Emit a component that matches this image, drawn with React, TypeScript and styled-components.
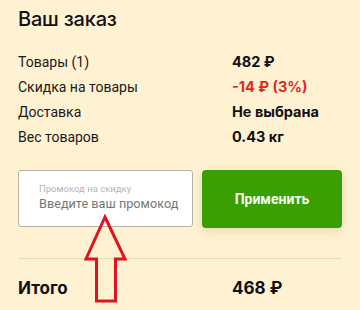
import styled, { createGlobalStyle } from "styled-components";

const Global = createGlobalStyle`
  html, body {
    margin: 0;
    padding: 0;
    background: #fef2d3;
  }
  body {
    font-family: Inter, "Noto Sans", "Liberation Sans", sans-serif;
    color: #111;
  }
`;

const Panel = styled.section`
  position: relative;
  width: 360px;
  height: 310px;
  box-sizing: border-box;
  padding: 6px 18px 0;
  overflow: hidden;
`;

const Title = styled.h2`
  margin: 0;
  font-size: 20px;
  line-height: 26px;
  font-weight: 500;
  letter-spacing: -0.2px;
`;

const Summary = styled.dl`
  margin: 17px 0 0;
  display: grid;
  grid-template-columns: 214px 1fr;
  grid-auto-rows: 25px;
  align-items: center;
`;

const Label = styled.dt`
  font-family: Roboto, "Liberation Sans", sans-serif;
  font-size: 14px;
  color: #1a1a1a;
`;

const Value = styled.dd<{ $accent?: boolean }>`
  margin: 0;
  font-size: 14.5px;
  font-weight: 700;
  color: ${({ $accent }) => ($accent ? "#e22a1e" : "#111")};
`;

const PromoRow = styled.div`
  display: flex;
  gap: 9px;
  margin-top: 21px;
`;

const PromoField = styled.label`
  width: 175px;
  height: 57px;
  box-sizing: border-box;
  padding: 12px 0 0 20px;
  background: #fff;
  border: 1px solid #b9b2a4;
  border-radius: 3px;
  display: flex;
  flex-direction: column;
  gap: 2px;
`;

const FieldHint = styled.span`
  font-family: Roboto, "Liberation Sans", sans-serif;
  font-size: 9.5px;
  color: #b4b4b4;
`;

const FieldInput = styled.input`
  width: 150px;
  border: 0;
  padding: 0;
  outline: none;
  background: transparent;
  font-family: Roboto, "Liberation Sans", sans-serif;
  font-size: 12.7px;
  color: #333;
  &::placeholder {
    color: #777;
  }
`;

const ApplyButton = styled.button`
  width: 140px;
  height: 58px;
  border: 0;
  border-radius: 4px;
  background: #3a9f03;
  color: #f4fff0;
  font-family: Roboto, "Liberation Sans", sans-serif;
  font-size: 14px;
  font-weight: 700;
  box-shadow: 0 3px 10px rgba(120, 100, 40, 0.18);
  cursor: pointer;
`;

const Divider = styled.hr`
  margin: 30px 0 0;
  border: 0;
  border-top: 1px solid #e6dbbd;
`;

const TotalRow = styled.div`
  display: grid;
  grid-template-columns: 214px 1fr;
  margin-top: 19px;
  font-size: 17px;
  font-weight: 700;
`;

const Annotation = styled.svg`
  position: absolute;
  left: 0;
  top: 0;
  pointer-events: none;
`;

export default function App() {
  return (
    <>
      <Global />
      <Panel>
        <Title>Ваш заказ</Title>
        <Summary>
          <Label>Товары (1)</Label>
          <Value>482 ₽</Value>
          <Label>Скидка на товары</Label>
          <Value $accent>-14 ₽ (3%)</Value>
          <Label>Доставка</Label>
          <Value>Не выбрана</Value>
          <Label>Вес товаров</Label>
          <Value>0.43 кг</Value>
        </Summary>

        <PromoRow>
          <PromoField>
            <FieldHint>Промокод на скидку</FieldHint>
            <FieldInput placeholder="Введите ваш промокод" />
          </PromoField>
          <ApplyButton>Применить</ApplyButton>
        </PromoRow>

        <Divider />

        <TotalRow>
          <span>Итого</span>
          <span>468 ₽</span>
        </TotalRow>

        <Annotation width="360" height="310" viewBox="0 0 360 310">
          <polygon
            points="105,217 125,259 115.5,259 115.5,301 96.5,301 96.5,259 86,259"
            fill="none"
            stroke="#e0141e"
            strokeWidth="3"
            strokeLinejoin="miter"
          />
        </Annotation>
      </Panel>
    </>
  );
}
